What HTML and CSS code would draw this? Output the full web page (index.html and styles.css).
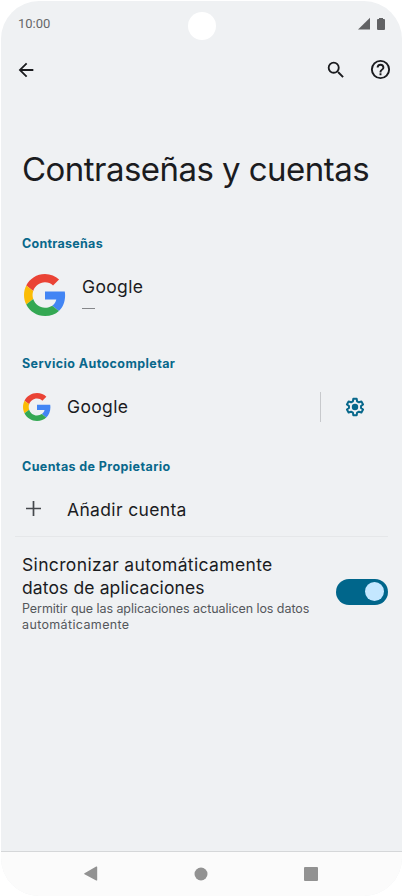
FILE: index.html
```html
<!DOCTYPE html>
<html lang="es">
<head>
<meta charset="utf-8">
<meta name="viewport" content="width=device-width">
<title>Contraseñas y cuentas</title>
<link rel="stylesheet" href="styles.css">
</head>
<body>
<svg class="defs" width="0" height="0" aria-hidden="true">
  <symbol id="google" viewBox="0 0 48 48">
    <path fill="#ea4335" d="M24 9.5c3.54 0 6.71 1.22 9.21 3.6l6.85-6.85C35.9 2.38 30.47 0 24 0 14.62 0 6.51 5.38 2.56 13.22l7.98 6.19C12.43 13.72 17.74 9.5 24 9.5z"/>
    <path fill="#4285f4" d="M46.98 24.55c0-1.57-.15-3.09-.38-4.55H24v9.02h12.94c-.58 2.96-2.26 5.48-4.78 7.18l7.73 6c4.51-4.18 7.09-10.36 7.09-17.65z"/>
    <path fill="#fbbc05" d="M10.53 28.59c-.48-1.45-.76-2.99-.76-4.59s.27-3.14.76-4.59l-7.98-6.19C.92 16.46 0 20.12 0 24s.92 7.54 2.56 10.78l7.97-6.19z"/>
    <path fill="#34a853" d="M24 48c6.48 0 11.93-2.13 15.89-5.81l-7.73-6c-2.15 1.45-4.92 2.3-8.16 2.3-6.26 0-11.57-4.22-13.47-9.91l-7.98 6.19C6.51 42.62 14.62 48 24 48z"/>
  </symbol>
</svg>
<div class="phone">
  <header class="status">
    <span class="time">10:00</span>
    <span class="camera"></span>
    <svg class="indicators" width="28" height="14" viewBox="0 0 28 14">
      <path d="M0 12.5 12 .8v11.700z"/>
      <path d="M21 1h4v1h1q1 0 1 1v9q0 1-1 1h-5.800q-1.200 0-1.200-1V3q0-1 1-1h1z"/>
    </svg>
  </header>
  <nav class="toolbar">
    <svg class="back" width="22" height="22" viewBox="0 0 24 24"><path d="M20 11H7.830l5.590-5.590L12 4l-8 8 8 8 1.410-1.410L7.830 13H20z"/></svg>
    <svg class="search" width="22" height="22" viewBox="0 0 24 24"><path d="M15.500 14h-.79l-.28-.27A6.470 6.470 0 0 0 16 9.500 6.500 6.500 0 1 0 9.500 16c1.610 0 3.090-.59 4.230-1.570l.27.280v.79l5 4.990L20.490 19zm-6 0a4.500 4.500 0 1 1 0-9 4.500 4.500 0 0 1 0 9z"/></svg>
    <svg class="help" width="23" height="23" viewBox="0 0 24 24"><path d="M11 18h2v-2h-2zm1-16a10 10 0 1 0 0 20 10 10 0 0 0 0-20zm0 18a8 8 0 1 1 0-16 8 8 0 0 1 0 16zm0-14a4 4 0 0 0-4 4h2a2 2 0 1 1 4 0c0 2-3 1.750-3 5h2c0-2.250 3-2.500 3-5a4 4 0 0 0-4-4z"/></svg>
  </nav>
  <main>
    <h1>Contraseñas y cuentas</h1>
    <h2 class="passwords">Contraseñas</h2>
    <div class="row row-large">
      <svg class="logo-large" width="42" height="42"><use href="#google"/></svg>
      <div class="provider"><span class="label">Google</span><span class="dash"></span></div>
    </div>
    <h2 class="autofill">Servicio Autocompletar</h2>
    <div class="row">
      <svg class="icon" width="28" height="28"><use href="#google"/></svg>
      <span class="label">Google</span>
      <button class="settings" aria-label="Ajustes">
        <svg width="22" height="22" viewBox="0 0 24 24"><path class="gear" d="m10.200 3-.5 2.800-2 1.100L5 6 3.200 9.200l2.200 1.800v2l-2.200 1.800L5 18l2.700-.9 2 1.100.5 2.800h3.600l.5-2.800 2-1.100 2.700.9 1.800-3.200-2.200-1.800v-2l2.200-1.800L19 6l-2.700.9-2-1.100-.5-2.800z"/><circle cx="12" cy="12" r="3.500"/></svg>
      </button>
    </div>
    <h2 class="accounts">Cuentas de Propietario</h2>
    <div class="row row-add">
      <svg class="icon plus" width="28" height="28" viewBox="0 0 28 28"><path d="M13.500 6v15M6 13.500h15"/></svg>
      <span class="label add">Añadir cuenta</span>
    </div>
    <hr>
    <div class="sync">
      <div class="copy">
        <div class="label line-one">Sincronizar automáticamente</div>
        <div class="label line-two">datos de aplicaciones</div>
        <div class="note note-one">Permitir que las aplicaciones actualicen los datos</div>
        <div class="note note-two">automáticamente</div>
      </div>
      <span class="switch" role="switch" aria-checked="true"></span>
    </div>
  </main>
  <footer>
    <svg width="14" height="16" viewBox="0 0 14 16"><path d="M.5 7.300 12.200.6q1-.5 1 .5v12.800q0 1-1 .5L.5 8.200q-.7-.4 0-.9z"/></svg>
    <svg width="14" height="14" viewBox="0 0 14 14"><circle cx="7" cy="7" r="6.500"/></svg>
    <svg width="14" height="14" viewBox="0 0 14 14"><rect width="14" height="14" rx="1"/></svg>
  </footer>
</div>
</body>
</html>
```
FILE: styles.css
```css
* { box-sizing: border-box; }
body { margin: 0; background: #fff; font-family: Inter, "Liberation Sans", sans-serif; color: #1b1c1f; }
.defs { display: block; }
svg { flex: none; display: block; }
.phone { width: 401px; height: 895px; margin: 1px 1px 0; background: #eff1f3; border-radius: 38px; overflow: hidden; display: flex; flex-direction: column; }
.status { height: 44px; display: grid; grid-template-columns: 1fr 28px 1fr; padding: 0 16px 0 17px; }
.time { font: 13px/16px Roboto, sans-serif; padding-top: 15px; color: #666769; white-space: nowrap; }
.camera { width: 28px; height: 28px; margin-top: 11px; border-radius: 50%; background: #fff; }
.indicators { justify-self: end; margin-top: 15.5px; fill: #616264; }
.toolbar { height: 50px; display: flex; align-items: center; padding: 0 10px 0 14px; fill: #1b1c1f; }
.search { margin-left: auto; }
.help { margin: -1px 0 0 22px; }
main { padding: 0 14px; }
h1 { margin: 52px 0 0 7px; font-size: 33px; line-height: 44px; font-weight: 400; letter-spacing: -.54px; white-space: nowrap; }
h2 { margin: 0 0 0 7px; font-size: 12.500px; line-height: 18px; font-weight: 700; letter-spacing: .4px; color: #08688b; white-space: nowrap; }
.passwords { margin-top: 44px; letter-spacing: .27px; }
.row { display: flex; align-items: center; height: 67px; padding-left: 8px; }
.row-large { align-items: flex-start; height: 75px; padding-top: 21px; }
.logo-large { margin-left: 1px; }
.provider { margin-left: 16px; padding-top: 1px; }
.label { display: block; font-size: 17.500px; line-height: 23px; letter-spacing: .35px; white-space: nowrap; }
.line-two { letter-spacing: .12px; }
.dash { display: block; width: 13px; height: 1px; margin-top: 10px; background: #85878a; }
.autofill { margin-top: 27px; }
.icon { margin-right: 16px; }
.settings { margin: 0 6px 0 auto; padding: 0 0 0 23px; width: 62px; height: 30px; border: 0; border-left: 1px solid #c7c9cc; background: none; fill: #08688b; }
.gear { fill: none; stroke: #08688b; stroke-width: 2.200; stroke-linejoin: round; }
.accounts { margin-top: 18px; }
.row-add { height: 60px; padding-top: 6px; }
.plus { fill: none; stroke: #45484c; stroke-width: 1.700; margin-left: -3px; margin-right: 19px; }
hr { width: 373px; height: 1px; margin: 0; border: 0; background: #e5e7e9; }
.sync { display: flex; align-items: center; justify-content: space-between; padding: 16px 0 0 7px; }
.note { font-size: 12.500px; line-height: 16px; color: #54575b; white-space: nowrap; }
.note-one { margin-top: 2px; letter-spacing: -.06px; }
.note-two { letter-spacing: .36px; }
.switch { flex: none; width: 52px; height: 26px; margin-top: -3px; padding: 3.500px 4px; border-radius: 13px; background: #00668b; display: flex; justify-content: flex-end; }
.switch::after { content: ""; width: 19px; height: 19px; border-radius: 50%; background: #c4e7ff; }
footer { margin: auto -1px 0; height: 45px; padding: 0 85px 1px 84px; border-top: 1px solid #d5d7d9; background: #fbfbfb; fill: #929292; display: flex; align-items: center; justify-content: space-between; }
```
